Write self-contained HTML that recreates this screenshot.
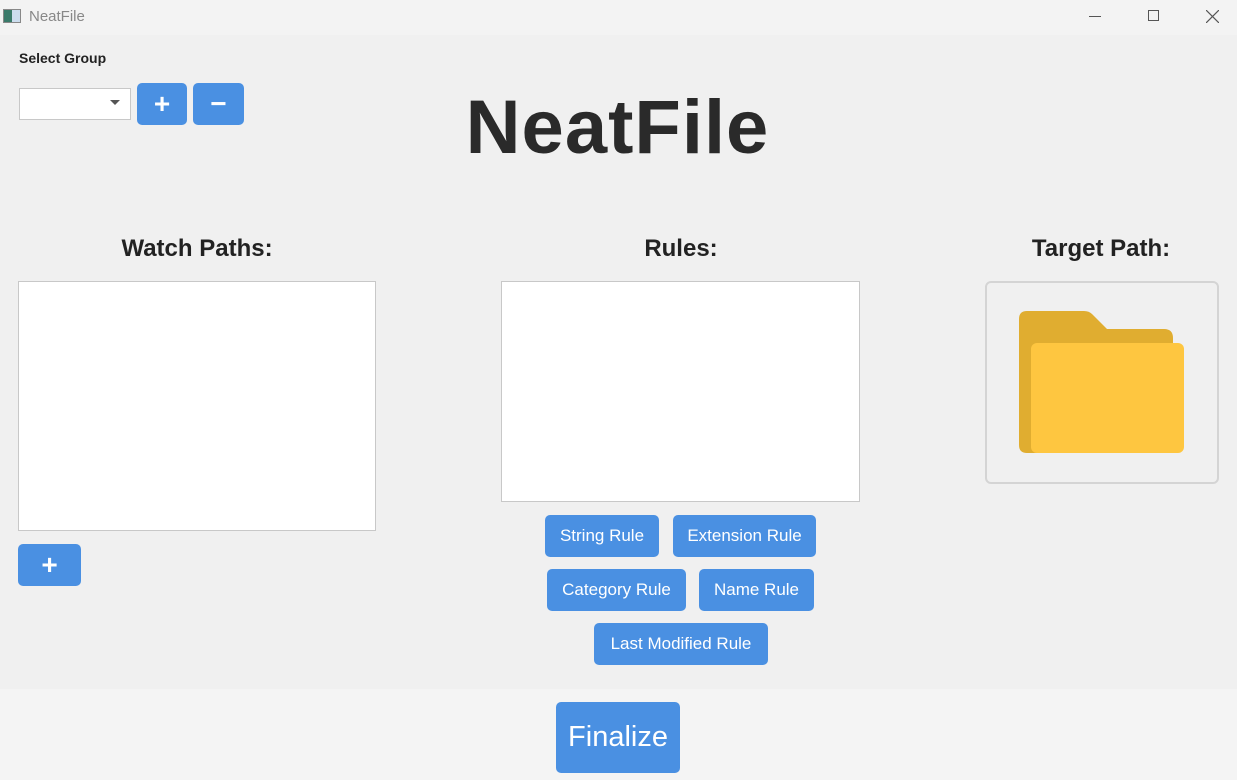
<!DOCTYPE html>
<html><head><style>
*{margin:0;padding:0;box-sizing:border-box}
body{width:1237px;height:780px;background:#f0f0f0;position:relative;overflow:hidden;font-family:"Liberation Sans",sans-serif}
.a{position:absolute}
.btn{position:absolute;background:#4a90e2;color:#fff;border-radius:5px;display:flex;align-items:center;justify-content:center;font-size:17px}
.h{position:absolute;font-weight:bold;font-size:24px;color:#222;text-align:center;width:300px}
.box{position:absolute;background:#fff;border:1px solid #c8c8c8}
</style></head><body>
<div class="a" style="left:0;top:0;width:1237px;height:35px;background:#f3f3f3"></div>
<div class="a" style="left:3px;top:9px;width:18px;height:14px;border:1px solid #888;background:linear-gradient(90deg,#3a7a6a 0 50%,#cde 50%)"></div>
<div class="a" style="left:29px;top:8px;font-size:15px;color:#888">NeatFile</div>
<div class="a" style="left:1089px;top:16px;width:12px;height:1px;background:#555"></div>
<div class="a" style="left:1148px;top:10px;width:11px;height:11px;border:1px solid #555"></div>
<svg class="a" style="left:1206px;top:10px" width="13" height="13"><path d="M0 0L13 13M13 0L0 13" stroke="#555" stroke-width="1.2"/></svg>
<div class="a" style="left:19px;top:50px;font-size:14px;font-weight:bold;color:#222">Select Group</div>
<div class="box" style="left:19px;top:88px;width:112px;height:32px"></div>
<div class="a" style="left:110px;top:100px;border-left:5px solid transparent;border-right:5px solid transparent;border-top:5px solid #555"></div>
<div class="btn" style="left:137px;top:83px;width:50px;height:42px;font-size:28px;font-weight:bold">+</div>
<div class="btn" style="left:193px;top:83px;width:51px;height:42px;font-size:28px;font-weight:bold">−</div>
<div class="a" style="left:440px;top:84px;width:355px;text-align:center;font-size:76px;font-weight:bold;color:#2a2a2a;letter-spacing:1px">NeatFile</div>
<div class="h" style="left:47px;top:235px">Watch Paths:</div>
<div class="h" style="left:531px;top:235px">Rules:</div>
<div class="h" style="left:951px;top:235px">Target Path:</div>
<div class="box" style="left:18px;top:281px;width:358px;height:250px"></div>
<div class="box" style="left:501px;top:281px;width:359px;height:221px"></div>
<div class="a" style="left:985px;top:281px;width:234px;height:203px;border:2px solid #d4d4d4;border-radius:6px"></div>
<svg class="a" style="left:1019px;top:311px" width="166" height="143"><path d="M8 0H65Q70 0 73 3L88 18H145Q154 18 154 27V142H8Q0 142 0 134V8Q0 0 8 0Z" fill="#e0ad30"/><rect x="12" y="32" width="153" height="110" rx="6" fill="#fec640"/></svg>
<div class="btn" style="left:18px;top:544px;width:63px;height:42px;font-size:28px;font-weight:bold">+</div>
<div class="btn" style="left:545px;top:515px;width:114px;height:42px">String Rule</div>
<div class="btn" style="left:673px;top:515px;width:143px;height:42px">Extension Rule</div>
<div class="btn" style="left:547px;top:569px;width:139px;height:42px">Category Rule</div>
<div class="btn" style="left:699px;top:569px;width:115px;height:42px">Name Rule</div>
<div class="btn" style="left:594px;top:623px;width:174px;height:42px">Last Modified Rule</div>
<div class="a" style="left:0;top:689px;width:1237px;height:91px;background:#f4f4f4"></div>
<div class="btn" style="left:556px;top:702px;width:124px;height:71px;font-size:29px">Finalize</div>
</body></html>
